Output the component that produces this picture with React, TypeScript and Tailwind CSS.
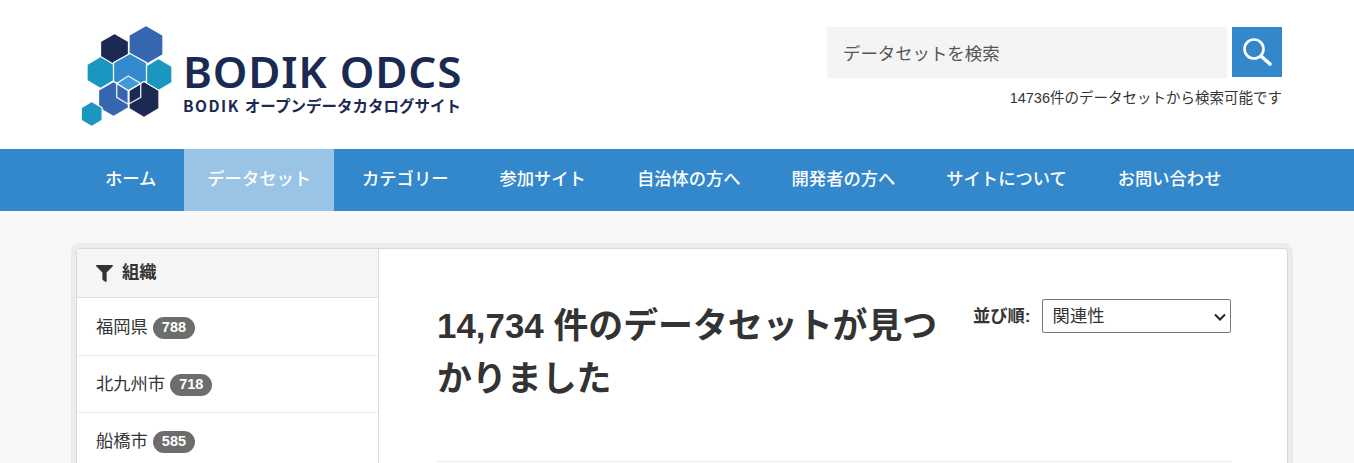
import { FC } from "react";
import { FaFilter } from "react-icons/fa";

const FONT = `font-['Liberation_Sans','Noto_Sans_CJK_JP',sans-serif]`;

const navItems = [
  { name: "ホーム" },
  { name: "データセット", active: true },
  { name: "カテゴリー" },
  { name: "参加サイト" },
  { name: "自治体の方へ" },
  { name: "開発者の方へ" },
  { name: "サイトについて" },
  { name: "お問い合わせ" },
];

const orgs = [
  { name: "福岡県", count: 788 },
  { name: "北九州市", count: 718 },
  { name: "船橋市", count: 585 },
];

// pointy-top hexagon
const hex = (cx: number, cy: number, rx: number, ry: number) =>
  [
    [cx, cy - ry],
    [cx + rx, cy - ry / 2],
    [cx + rx, cy + ry / 2],
    [cx, cy + ry],
    [cx - rx, cy + ry / 2],
    [cx - rx, cy - ry / 2],
  ]
    .map((p) => p.join(","))
    .join(" ");

const Logo: FC = () => (
  <svg viewBox="80 25 92 105" className="w-[92px] h-[105px] shrink-0">
    <g stroke="#fff" strokeWidth="1.3">
      <polygon points={hex(114.5, 49.5, 14, 16)} fill="#1a2a52" />
      <polygon points={hex(146, 45, 17, 19.5)} fill="#3566b0" />
      <polygon points={hex(100.5, 72.5, 13.5, 16)} fill="#1a96c0" />
      <polygon points={hex(158.5, 74.5, 13.5, 16)} fill="#1a96c0" />
      <polygon points={hex(130, 72, 16.5, 18.5)} fill="#338acc" />
      <polygon points={hex(113.5, 99, 15, 17.5)} fill="#3566b0" />
      <polygon points={hex(144, 99.5, 15, 18)} fill="#1a2a52" />
      <polygon points={hex(91.7, 114, 10.5, 12.5)} fill="#1a96c0" />
    </g>
    <polygon points="128.3,76 140.7,83.3 128.3,90.7 116.7,83.3" fill="#3f9ad6" />
    <polygon
      points="128.3,76 140.7,83.3 140.7,97.3 128.3,104.3 116.7,97.3 116.7,83.3"
      fill="none"
      stroke="#fff"
      strokeOpacity="0.85"
      strokeWidth="1.4"
    />
    <path
      d="M116.7 83.3 128.3 90.7 140.7 83.3M128.3 90.7V104.3"
      fill="none"
      stroke="#fff"
      strokeOpacity="0.85"
      strokeWidth="1.4"
    />
  </svg>
);

export default function App() {
  return (
    <div className={`h-[463px] overflow-hidden bg-[#f8f8f8] text-[#333] ${FONT}`}>
      <header className="h-[149px] bg-white flex justify-between pr-[72px]">
        <div className="flex items-start pt-[25px] pl-[80px]">
          <Logo />
          <div className="ml-[11px] mt-[26px] text-[#1a2a52]">
            <div className="font-['Noto_Sans',sans-serif] font-semibold text-[44px] tracking-[0.8px] leading-[40px] whitespace-nowrap">
              BODIK ODCS
            </div>
            <div className="mt-[5px] font-['Noto_Sans_CJK_JP',sans-serif] font-bold text-[15.5px] leading-[18px] whitespace-nowrap">
              <span className="tracking-[1.5px]">BODIK </span>
              オープンデータカタログサイト
            </div>
          </div>
        </div>
        <div className="pt-[27px] w-[455px]">
          <div className="flex">
            <input
              placeholder="データセットを検索"
              className="w-[400px] h-[51px] bg-[#f4f4f4] pl-[16px] pt-[3px] text-[17.4px] placeholder:text-[#555] outline-none"
            />
            <button className="ml-[5px] w-[50px] h-[50px] bg-[#3388cc] flex items-center justify-center">
              <svg viewBox="0 0 32 32" className="w-[32px] h-[32px]" fill="none" stroke="#fff">
                <circle cx="13" cy="13" r="9.5" strokeWidth="2.6" />
                <path d="M20.5 20.5 29 28" strokeWidth="3.6" strokeLinecap="round" />
              </svg>
            </button>
          </div>
          <p className="mt-[10px] text-right text-[14.5px] leading-[20px] text-[#333] whitespace-nowrap">
            14736件のデータセットから検索可能です
          </p>
        </div>
      </header>

      <nav className="h-[62px] bg-[#3388cc] flex gap-[5px] pl-[82px]">
        {navItems.map((item) => (
          <a
            key={item.name}
            className={`px-[23px] flex items-center text-white font-medium text-[17.3px] ${
              item.active ? "bg-[#99c4e6]" : ""
            }`}
          >
            {item.name}
          </a>
        ))}
      </nav>

      <div className="pt-[37px] pl-[76px]">
        <div className="w-[1212px] h-[300px] flex bg-white border border-[#d9d9d9] rounded-[4px] shadow-[0_0_0_5px_#ececec]">
          <aside className="w-[302px] border-r border-[#dcdcdc] shrink-0">
            <h2 className="h-[49px] bg-[#f5f5f5] border-b border-[#dedede] flex items-center pl-[19px] font-bold text-[17.3px] text-[#333]">
              <FaFilter className="w-[17px] h-[17px] mr-[9px]" />
              組織
            </h2>
            <ul className="pt-[1px]">
              {orgs.map((org) => (
                <li
                  key={org.name}
                  className="h-[57px] pt-[1px] border-b border-dotted border-[#ddd] flex items-center pl-[19px] text-[17.3px] text-[#333]"
                >
                  {org.name}
                  <span className="ml-[5px] h-[22px] px-[9px] rounded-full bg-[#6d6d6d] text-white font-bold text-[14.5px] flex items-center">
                    {org.count}
                  </span>
                </li>
              ))}
            </ul>
          </aside>
          <main className="flex-1 pt-[50px] pl-[58px] pr-[56px]">
            <div className="h-[163px] flex border-b border-dotted border-[#ddd]">
              <h1 className="w-[510px] font-bold text-[34.9px] leading-[53px] text-[#333]">
                14,734 件のデータセットが見つかりました
              </h1>
              <div className="ml-[26px] flex items-start">
                <label className="font-bold text-[17.3px] leading-[34px] text-[#333] whitespace-nowrap">
                  並び順:
                </label>
                <div className="relative ml-[11px]">
                  <select className="block appearance-none w-[189px] h-[34px] border border-[#767676] rounded-[2px] bg-white pl-[10px] pt-[2px] text-[17.3px] text-[#333]">
                    <option>関連性</option>
                  </select>
                  <svg
                    viewBox="0 0 12 8"
                    className="absolute right-[5px] top-[14px] w-[12px] h-[8px]"
                    fill="none"
                    stroke="#222"
                    strokeWidth="2"
                  >
                    <path d="M1 1.5 6 6.5 11 1.5" />
                  </svg>
                </div>
              </div>
            </div>
          </main>
        </div>
      </div>
    </div>
  );
}
